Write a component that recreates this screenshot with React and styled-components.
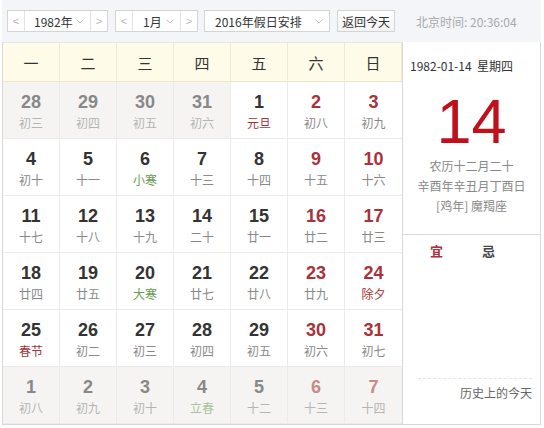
import React from 'react';
import styled, { createGlobalStyle } from 'styled-components';

const GlobalStyle = createGlobalStyle`
  html, body {
    margin: 0;
    padding: 0;
    background: #fff;
  }
  body {
    font-family: "Liberation Sans", "Noto Sans CJK SC", sans-serif;
  }
`;

const Widget = styled.div`
  box-sizing: border-box;
  width: 544px;
  height: 428px;
  padding: 0 3px 0 2px;
`;

const TopBar = styled.div`
  box-sizing: border-box;
  height: 42px;
  display: flex;
  align-items: center;
  padding: 0 0 0 5px;
  background: #f4f5f9;
  font-family: "Noto Sans CJK SC", sans-serif;
  font-size: 12px;
  color: #333;
`;

const Picker = styled.div`
  box-sizing: border-box;
  height: 22px;
  width: ${p => p.w}px;
  margin-right: ${p => p.gap}px;
  display: flex;
  align-items: stretch;
  border: 1px solid #d4d4d4;
  background: #fff;
`;

const ArrowBox = styled.div`
  width: 16px;
  display: flex;
  align-items: center;
  justify-content: center;
  color: #b8b8b8;
  font-family: "Liberation Sans", sans-serif;
  font-size: 11px;
  border-${p => p.side}: 1px solid #e2e2e2;
`;

const PickerLabel = styled.div`
  flex: 1;
  display: flex;
  align-items: center;
  justify-content: space-between;
  padding: 0 6px 0 ${p => p.pl}px;
  white-space: nowrap;
`;

const Chevron = () => (
  <svg width="8" height="5" viewBox="0 0 8 5">
    <path d="M0.5 0.5 L4 4 L7.5 0.5" fill="none" stroke="#c4c4c4" strokeWidth="1" />
  </svg>
);

const TodayButton = styled.div`
  box-sizing: border-box;
  height: 22px;
  width: 58px;
  display: flex;
  align-items: center;
  justify-content: center;
  border: 1px solid #d4d4d4;
  background: linear-gradient(#fff, #f3f3f3);
  margin-right: 21px;
`;

const Clock = styled.div`
  color: #a9a9a9;
  white-space: nowrap;
`;

const Body = styled.div`
  display: flex;
  border-bottom: 1px solid #d8d8d8;
`;

const Grid = styled.div`
  box-sizing: border-box;
  width: 400px;
  border-left: 1px solid #d8d8d8;
  border-top: 1px solid #e6e6e6;
  display: grid;
  grid-template-columns: repeat(7, 57px);
  grid-template-rows: 39px repeat(6, 57px);
`;

const HeadCell = styled.div`
  display: flex;
  align-items: center;
  justify-content: center;
  background: #fffbe9;
  border-right: 1px solid #f2ead0;
  border-bottom: 1px solid #efe6c8;
  font-family: "Noto Sans CJK SC", sans-serif;
  font-size: 15px;
  color: #333;
  &:last-child { border-right: none; }
`;

const DayCell = styled.div`
  box-sizing: border-box;
  display: flex;
  flex-direction: column;
  align-items: center;
  padding-top: 10px;
  background: ${p => (p.other ? '#f5f4f2' : '#fff')};
  border-right: 1px solid #ebebeb;
  border-bottom: 1px solid #ebebeb;
  &:nth-child(7n) { border-right: none; }
`;

const DayNum = styled.div`
  font-family: "Liberation Sans", sans-serif;
  font-weight: bold;
  font-size: 18px;
  line-height: 20px;
  color: ${p => {
    if (p.other) return p.weekend ? '#c98a84' : '#888';
    return p.weekend ? '#a8323a' : '#333';
  }};
`;

const Lunar = styled.div`
  margin-top: 3px;
  font-family: "Noto Sans CJK SC", sans-serif;
  font-size: 12px;
  line-height: 16px;
  color: ${p => {
    if (p.kind === 'fest') return p.other ? '#c98a84' : '#a8323a';
    if (p.kind === 'term') return p.other ? '#a9c49a' : '#6a9b50';
    return p.other ? '#b4b4b4' : '#888';
  }};
`;

const Side = styled.div`
  box-sizing: border-box;
  width: 140px;
  border-left: 1px solid #d8d8d8;
  border-right: 1px solid #d8d8d8;
  display: flex;
  flex-direction: column;
  font-family: "Noto Sans CJK SC", sans-serif;
`;

const SideDate = styled.div`
  padding: 16px 0 0 7px;
  font-size: 12px;
  line-height: 16px;
  color: #333;
  white-space: nowrap;
`;

const BigDay = styled.div`
  margin-top: 16px;
  text-align: center;
  font-family: "Liberation Sans", sans-serif;
  font-size: 63px;
  line-height: 63px;
  color: #c0111a;
`;

const LunarInfo = styled.div`
  margin-top: 3px;
  text-align: center;
  font-size: 12px;
  line-height: 20px;
  color: #888;
  white-space: nowrap;
`;

const Divider = styled.div`
  margin-top: 18px;
  border-top: 1px solid #dcdcdc;
`;

const YiJi = styled.div`
  display: flex;
  padding: 6px 0 0 27px;
  gap: 39px;
  font-size: 13px;
  font-weight: bold;
`;

const Mark = styled.span`
  color: ${p => p.c};
`;

const Spacer = styled.div`
  flex: 1;
`;

const HistoryLink = styled.div`
  margin: 0 8px 23px 15px;
  padding-top: 6px;
  border-top: 1px dashed #e4e4e4;
  text-align: right;
  font-size: 12px;
  line-height: 16px;
  color: #666;
`;

const weekdays = ['一', '二', '三', '四', '五', '六', '日'];

const rows = [
  [[28, '初三', 1], [29, '初四', 1], [30, '初五', 1], [31, '初六', 1], [1, '元旦', 0, 'fest'], [2, '初八'], [3, '初九']],
  [[4, '初十'], [5, '十一'], [6, '小寒', 0, 'term'], [7, '十三'], [8, '十四'], [9, '十五'], [10, '十六']],
  [[11, '十七'], [12, '十八'], [13, '十九'], [14, '二十'], [15, '廿一'], [16, '廿二'], [17, '廿三']],
  [[18, '廿四'], [19, '廿五'], [20, '大寒', 0, 'term'], [21, '廿七'], [22, '廿八'], [23, '廿九'], [24, '除夕', 0, 'fest']],
  [[25, '春节', 0, 'fest'], [26, '初二'], [27, '初三'], [28, '初四'], [29, '初五'], [30, '初六'], [31, '初七']],
  [[1, '初八', 1], [2, '初九', 1], [3, '初十', 1], [4, '立春', 1, 'term'], [5, '十二', 1], [6, '十三', 1], [7, '十四', 1]],
];

const App = () => {
  return (
    <>
      <GlobalStyle />
      <Widget>
        <TopBar>
          <Picker w={101} gap={7}>
            <ArrowBox side="right">&lt;</ArrowBox>
            <PickerLabel pl={9}>1982年<Chevron /></PickerLabel>
            <ArrowBox side="left">&gt;</ArrowBox>
          </Picker>
          <Picker w={83} gap={6}>
            <ArrowBox side="right">&lt;</ArrowBox>
            <PickerLabel pl={10}>1月<Chevron /></PickerLabel>
            <ArrowBox side="left">&gt;</ArrowBox>
          </Picker>
          <Picker w={126} gap={7}>
            <PickerLabel pl={10}>2016年假日安排<Chevron /></PickerLabel>
          </Picker>
          <TodayButton>返回今天</TodayButton>
          <Clock>北京时间: 20:36:04</Clock>
        </TopBar>
        <Body>
          <Grid>
            {weekdays.map(w => <HeadCell key={w}>{w}</HeadCell>)}
            {rows.flatMap((row, ri) =>
              row.map(([d, l, other, kind], ci) => {
                const weekend = ci >= 5;
                return (
                  <DayCell key={`${ri}-${ci}`} other={!!other}>
                    <DayNum other={!!other} weekend={weekend}>{d}</DayNum>
                    <Lunar other={!!other} kind={kind}>{l}</Lunar>
                  </DayCell>
                );
              })
            )}
          </Grid>
          <Side>
            <SideDate>1982-01-14&nbsp;&nbsp;星期四</SideDate>
            <BigDay>14</BigDay>
            <LunarInfo>
              农历十二月二十<br />
              辛酉年辛丑月丁酉日<br />
              [鸡年] 魔羯座
            </LunarInfo>
            <Divider />
            <YiJi>
              <Mark c="#a8323a">宜</Mark>
              <Mark c="#444">忌</Mark>
            </YiJi>
            <Spacer />
            <HistoryLink>历史上的今天</HistoryLink>
          </Side>
        </Body>
      </Widget>
    </>
  );
};

export default App;
